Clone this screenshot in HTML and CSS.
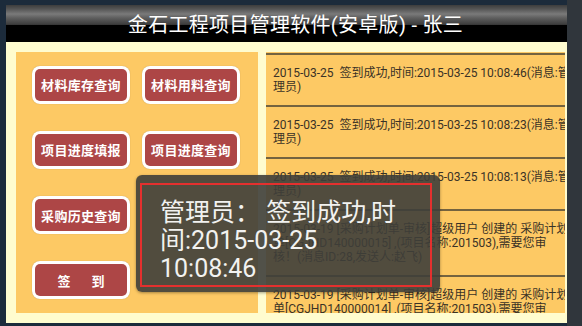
FILE: index.html
```html
<!DOCTYPE html>
<html lang="zh-CN">
<head>
<meta charset="utf-8">
<title>金石工程项目管理软件</title>
<link rel="stylesheet" href="styles.css">
</head>
<body>
<div class="screen">
  <div class="app">
    <header class="titlebar"><span class="title">金石工程项目管理软件(安卓版) - 张三</span></header>
    <main class="content">
      <section class="menu">
        <div class="menu-row">
          <button class="btn"><span>材料库存查询</span></button>
          <button class="btn"><span>材料用料查询</span></button>
        </div>
        <div class="menu-row">
          <button class="btn"><span>项目进度填报</span></button>
          <button class="btn"><span>项目进度查询</span></button>
        </div>
        <div class="menu-row">
          <button class="btn"><span>采购历史查询</span></button>
        </div>
        <div class="menu-row">
          <button class="btn"><span class="wide">签　到</span></button>
        </div>
      </section>
      <section class="messages">
        <div class="msg">2015-03-25&nbsp; 签到成功,时间:2015-03-25 10:08:46(消息:管<br>理员)</div>
        <div class="msg">2015-03-25&nbsp; 签到成功,时间:2015-03-25 10:08:23(消息:管<br>理员)</div>
        <div class="msg">2015-03-25&nbsp; 签到成功,时间:2015-03-25 10:08:13(消息:管<br>理员)</div>
        <div class="msg">2015-03-19 [采购计划单-审核]超级用户 创建的 采购计划<br>单[CGJHD140000015] ,(项目名称:201503),需要您审<br>核！(消息ID:28,发送人:赵飞)</div>
        <div class="msg">2015-03-19 [采购计划单-审核]超级用户 创建的 采购计划<br>单[CGJHD140000014] ,(项目名称:201503),需要您审<br>核！(消息ID:27,发送人:赵飞)</div>
      </section>
    </main>
  </div>
  <div class="toast">
    <div class="toast-frame"></div>
    <p class="toast-text">管理员： 签到成功,时<br>间:2015-03-25<br>10:08:46</p>
  </div>
</div>
</body>
</html>
```

FILE: styles.css
```css
* { box-sizing: border-box; }

html, body {
  margin: 0;
  padding: 0;
}

body {
  width: 582px;
  height: 326px;
  overflow: hidden;
  background: #1c2b3b;
  font-family: Roboto, "Noto Sans CJK SC", sans-serif;
}

.screen {
  position: relative;
  width: 582px;
  height: 326px;
  background: linear-gradient(to right, #1c2b3b 0, #1c2b3b 567px, #30363c 567px, #30363c 582px);
}

.app {
  margin-left: 6px;
  padding-top: 5px;
  width: 561px;
  display: flex;
  flex-direction: column;
}

.titlebar {
  height: 37px;
  display: flex;
  align-items: center;
  justify-content: center;
  padding-top: 2px;
  padding-left: 18px;
  background: linear-gradient(to bottom,
    #3d3d3d 0, #555 4px, #7a7a7a 9px, #5e5e5e 13px, #3e3e3e 19px, #333 20px,
    #000 20px, #000 37px);
}

.title {
  color: #ffffff;
  font-size: 20px;
  line-height: 26px;
  letter-spacing: 0.3px;
}

.content {
  height: 281px;
  background: #fffccf;
  padding: 10px 2px 10px 10px;
  display: flex;
  gap: 8px;
}

.menu {
  width: 242px;
  height: 261px;
  background: #fdc964;
  display: grid;
  grid-template-rows: repeat(4, 1fr);
  padding-left: 16px;
}

.menu-row {
  display: flex;
  align-items: center;
  gap: 12px;
}

.btn {
  width: 98px;
  height: 38px;
  padding: 3px;
  margin: 0;
  border: none;
  border-radius: 8px;
  background: #ffffff;
  box-shadow: 0 0 1px rgba(120, 100, 60, 0.5);
  font: inherit;
  cursor: pointer;
}

.btn span {
  display: flex;
  align-items: center;
  justify-content: center;
  width: 100%;
  height: 100%;
  border-radius: 5px;
  background: #ad4646;
  color: #ffffff;
  font-family: "Noto Sans CJK SC", sans-serif;
  font-weight: 700;
  font-size: 13px;
  letter-spacing: 0.3px;
}

.btn .wide {
  letter-spacing: 4px;
  padding-left: 4px;
}

.messages {
  width: 299px;
  height: 261px;
  background: #fdc964;
  overflow: hidden;
  padding-top: 1px;
}

.msg {
  border-top: 2px solid #74633f;
  padding: 11px 0 11px 7px;
  font-size: 12px;
  line-height: 14px;
  color: #3a3226;
  white-space: nowrap;
}

.toast {
  position: absolute;
  left: 136px;
  top: 175px;
  width: 304px;
  height: 117px;
  border-radius: 6px;
  background: rgba(62, 62, 58, 0.9);
  box-shadow: 0 1px 3px rgba(0, 0, 0, 0.35);
}

.toast-frame {
  position: absolute;
  left: 4px;
  top: 8px;
  width: 292px;
  height: 104px;
  border: 2px solid #e4302e;
}

.toast-text {
  position: relative;
  margin: 0;
  padding: 24px 0 0 24px;
  color: #f2f2f0;
  font-size: 25px;
  line-height: 28px;
  white-space: nowrap;
}
```
